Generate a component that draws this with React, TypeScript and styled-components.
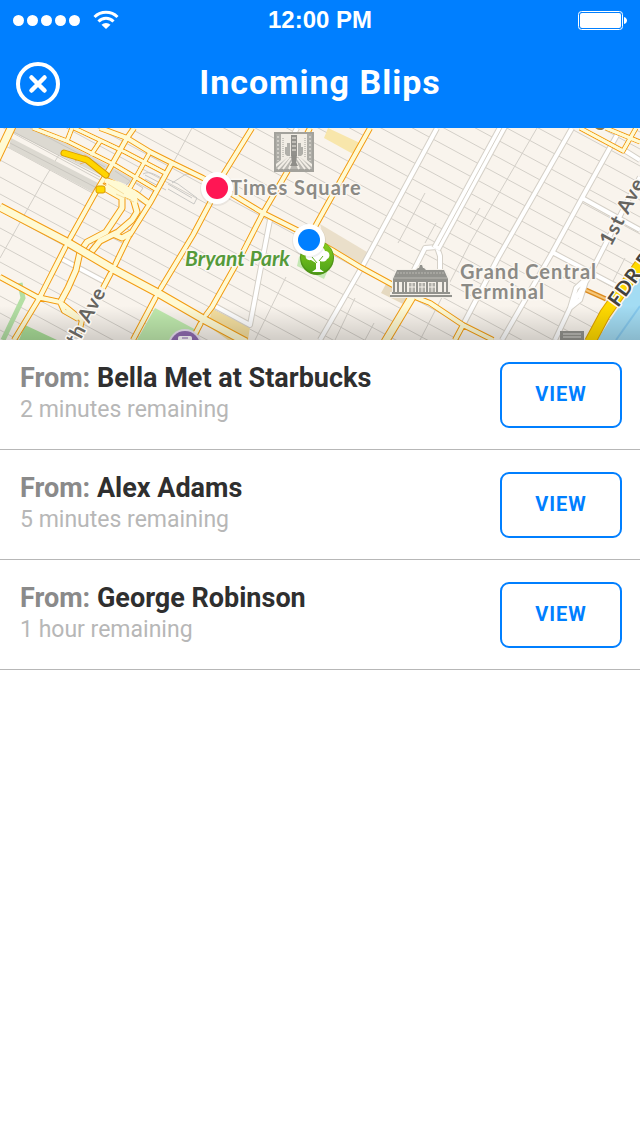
import React from "react";
import styled, { createGlobalStyle } from "styled-components";

const blue = "#007fff";

const GlobalStyle = createGlobalStyle`
  *, *::before, *::after { box-sizing: border-box; }
  body {
    margin: 0;
    background: #fff;
    font-family: Roboto, "Liberation Sans", sans-serif;
  }
`;

const Screen = styled.div`
  min-height: 100vh;
  background: #fff;
`;

const Header = styled.header`
  background: ${blue};
  color: #fff;
`;

const StatusBar = styled.div`
  display: grid;
  grid-template-columns: 1fr auto 1fr;
  align-items: center;
  height: 40px;
  padding: 0 13px;
`;

const Signal = styled.div`
  display: flex;
  align-items: center;
  gap: 3px;
`;

const Dot = styled.span`
  width: 11px;
  height: 11px;
  border-radius: 50%;
  background: #fff;
`;

const WifiIcon = styled.svg`
  margin-left: 10px;
`;

const Clock = styled.time`
  font: bold 24px "Liberation Sans", sans-serif;
`;

const BatteryIcon = styled.svg`
  justify-self: end;
`;

const NavBar = styled.div`
  display: grid;
  grid-template-columns: 44px 1fr 44px;
  align-items: center;
  height: 88px;
  padding: 0 16px;
`;

const CloseButton = styled.button`
  display: block;
  width: 44px;
  height: 44px;
  padding: 0;
  border: 0;
  background: none;
  color: inherit;
  cursor: pointer;

  svg { display: block; }
`;

const Title = styled.h1`
  margin: 0;
  padding-bottom: 4px;
  font-size: 34px;
  line-height: 40px;
  font-weight: 700;
  letter-spacing: 1px;
  text-align: center;
`;

const MapDrawing = styled.svg`
  display: block;
  width: 100%;
  height: auto;
  background: #f9f4ed;
`;

const MapLabel = styled.text`
  font-family: Lato, sans-serif;
  font-size: 20px;
  font-weight: 700;
  letter-spacing: 1px;
  paint-order: stroke;
  stroke: #fbf8f3;
  stroke-width: 3px;
  stroke-linejoin: round;
`;

const ParkLabel = styled(MapLabel)`
  font-size: 21px;
  font-style: italic;
  letter-spacing: 0;
`;

const BlipList = styled.ul`
  margin: 0;
  padding: 0;
  list-style: none;
`;

const BlipRow = styled.li`
  display: flex;
  justify-content: space-between;
  align-items: flex-start;
  gap: 20px;
  min-height: 110px;
  padding: 22px 18px 20px 20px;
  border-bottom: 1px solid #b7b7b7;
`;

const BlipText = styled.div`
  min-width: 0;
`;

const Sender = styled.h2`
  margin: 0;
  font-size: 27px;
  line-height: 32px;
  font-weight: 700;
  color: #2f2f2f;
`;

const FromLabel = styled.span`
  color: #8a8a8a;
`;

const Remaining = styled.p`
  margin: 0;
  font-size: 23px;
  line-height: 32px;
  font-weight: 400;
  color: #b7b7b7;
`;

const ViewButton = styled.button`
  flex: none;
  width: 122px;
  height: 66px;
  padding: 0 0 2px;
  border: 2px solid ${blue};
  border-radius: 9px;
  background: #fff;
  color: ${blue};
  font-family: inherit;
  font-size: 20px;
  font-weight: 700;
  letter-spacing: 1px;
  cursor: pointer;
`;

const streets = Array.from({ length: 34 }, (_, i) => {
  const y = -342 + i * 17;
  return `M0 ${y}L640 ${y + 346}`;
}).join("");

const laneAvenues =
  "M75 0L45 50L0 130M192 0L173 35M537 0L470 115L420 212M286 149L255 212M480 80L470 97M436 95L425 115M425 65L398 115M355 170L335 212M625 130L612 155M374 195L365 212";

const whiteRoads = [
  "M60 130L105 154",
  "M270 92L260 144L250 197L213 177",
  "M437 0L410 50L362 139L320 212",
  "M440 142L440 128L437 119L425 120L414 142",
  "M572 0L498 130L463 197",
  "M617 7L582 70L552 125L502 212",
  "M582 70L640 102",
  "M552 124L620 160",
  "M640 49L587 152L570 180L555 212",
  "M587 150L576 160L570 180L580 172L587 150",
  "M624 22L640 32",
  "M297 0L290 14",
];

const minorYellow = [
  "M33 0L67 13L113 36L157 62L148 77",
  "M74 0L125 24L165 45",
  "M72 0L67 13",
  "M101 12L91 27",
  "M150 24L130 60",
  "M580 0L623 23L636 0",
  "M606 0L640 14",
];

const yellowRoads = [
  "M100 0L127 10L150 24L172 35L203 50L230 65L263 85L297 102L332 122L360 139L393 157L410 167L430 175L463 197L493 212",
  "M134 0L127 10L110 40L97 62L68 114L40 169L14 212",
  "M172 35L150 75L128 110L113 141L103 160M82 192L79 205",
  "M252 0L223 47L210 75L193 107L158 165L133 212",
  "M310 0L287 44L263 85L243 124L212 179L203 191L192 212",
  "M370 0L341 52L312 104L300 112",
  "M463 197L455 212",
  "M0 149L37 169L60 174L82 192",
  "M60 174L64 183L78 191",
  "M210 195L240 211",
];

const ramps = [
  "M101 58L122 70L122 80L106 104L87 114L80 124L76 142L68 160L61 173",
  "M120 64L133 70L137 84L132 92L118 104L100 113L88 128",
  "M113 106L122 110L131 105",
  "M105 52L136 66L148 75",
  "M106 58L133 66",
];

const wideRoads = [
  "M0 79L67 114L113 141L158 165L203 191L246 214",
  "M13 -4L-4 32",
  "M412 169L385 214",
];

type RoadProps = {
  paths: string[];
  width: number;
  edge: string;
  fill: string;
};

function Roads({ paths, width, edge, fill }: RoadProps) {
  const d = paths.join("");
  return (
    <g fill="none" strokeLinejoin="round">
      <path d={d} stroke={edge} strokeWidth={width + 2} />
      <path d={d} stroke={fill} strokeWidth={width} />
    </g>
  );
}

function Marker({ x, y, color }: { x: number; y: number; color: string }) {
  return (
    <g>
      <circle cx={x} cy={y + 1} r="17" fill="#000" opacity=".06" />
      <circle cx={x} cy={y} r="16" fill="#fff" />
      <circle cx={x} cy={y} r="11" fill={color} />
    </g>
  );
}

function TimesSquareIcon() {
  return (
    <g transform="translate(274 4)">
      <rect width="40" height="40" fill="#a3a29c" />
      <rect x="2" y="2" width="36" height="35" fill="#f1ede5" />
      <path d="M2 2H7V28L2 32ZM38 2H33V28L38 32Z" fill="#aeada7" />
      <path d="M4 4V29M36 4V29" stroke="#f1ede5" strokeDasharray="2 2" />
      <path d="M9 6V26M31 6V26" stroke="#a3a29c" strokeDasharray="1 1" />
      <path d="M11 15H13V11H16V24H13L11 22ZM29 15H27V11H24V24H27L29 22Z" fill="#b0afa9" />
      <path d="M17 3H23V24H17Z" fill="#92918c" />
      <path d="M18 6H22M18 10H22M18 14H22M18 18H22" stroke="#f1ede5" />
      <path d="M2 37V35L14 25H26L38 35V37Z" fill="#b8b6b0" />
      <path
        d="M15 25L4 37M17 26L9 37M18 30L15 37M23 26L31 37M25 25L36 37M22 30L25 37"
        stroke="#f1ede5"
        strokeWidth="2"
      />
      <path d="M17 23H23L22 30L24 34H16L18 30Z" fill="#8f8e89" />
    </g>
  );
}

function TerminalIcon() {
  return (
    <g transform="translate(390 137)">
      <path
        d="M0 27H2V12L6 4H25L31 -2L37 4H55L60 12V27H62V33H0Z"
        fill="#f4f0e9"
      />
      <path
        d="M3 14L7 5H26L28 3H29L30 0H32L33 3H34L36 5H54L58 14V17H3Z"
        fill="#92928d"
      />
      <path d="M7 8H54" stroke="#b9b8b2" strokeDasharray="2 1" />
      <path d="M4 13H57" stroke="#b9b8b2" />
      <path
        d="M4 16V28M8 16V28M13 17V28M16 17V28M27 17V28M37 17V28M47 17V28M53 16V28M57 16V28"
        stroke="#92928d"
        strokeWidth="2"
      />
      <path d="M19 18H25V28H19ZM29 18H35V28H29ZM39 18H45V28H39Z" fill="#aeada7" />
      <path d="M22 18V28M32 18V28M42 18V28M19 22H25M29 22H35M39 22H45" stroke="#f4f0e9" />
      <path d="M2 28H60M0 31H62" stroke="#92928d" strokeWidth="2" />
    </g>
  );
}

function ParkIcon() {
  return (
    <g>
      <path d="M299 129L309 118L332 133L324 151L297 138Z" fill="#c5e8b4" />
      <circle cx="317" cy="130" r="17" fill="#4f9417" />
      <circle cx="317" cy="129" r="16" fill="url(#parkFill)" />
      <path
        d="M312 144L316 141V135L311 132C306 133 304 128 307 126C307 122 311 119 315 122C317 117 324 118 325 123C330 123 331 129 327 131C326 134 322 134 320 133V141L324 144Z"
        fill="#fff"
      />
      <path d="M317 135L312 129M319 133L323 128" stroke="#64b21d" />
    </g>
  );
}

function CityMap() {
  return (
    <MapDrawing viewBox="0 0 640 212" role="img" aria-label="Map of Midtown Manhattan">
      <defs>
        <linearGradient id="shade" x1="0" y1="0" x2="0" y2="1">
          <stop offset="0" stopColor="#000" stopOpacity="0" />
          <stop offset="1" stopColor="#000" stopOpacity=".16" />
        </linearGradient>
        <linearGradient id="parkFill" x1="0" y1="0" x2="0" y2="1">
          <stop offset="0" stopColor="#8ccf1c" />
          <stop offset="1" stopColor="#4ea31a" />
        </linearGradient>
      </defs>

      <g fill="none" stroke="#d3cfc8" strokeWidth="1">
        <path d={streets} />
        <path d={laneAvenues} />
      </g>

      <path d="M12 0H36L108 37L133 51L128 57L98 46L14 5Z" fill="#dcd9d1" />
      <path d="M11 10L98 55L94 65L9 20Z" fill="#dcd9d1" />
      <path d="M12 3L100 49M10 15L95 59M30 0L105 39" stroke="#c9c6bf" fill="none" />
      <path
        d="M115 43L130 53L126 57M118 41L135 50M143 46C150 42 157 48 165 52M145 51L166 62M145 47L164 57M165 50L178 56L197 70L194 76L168 61M168 56L192 70M172 55L186 46L204 49M135 55L143 60L139 66"
        stroke="#c9c8c5"
        fill="none"
      />

      <path d="M155 180L200 204L196 212H137Z" fill="#bfe9ad" />
      <path d="M25 197L57 212H19Z" fill="#a9dd98" />
      <path d="M20 155L23 170L3 212" fill="none" stroke="#b3dfa4" strokeWidth="5" />
      <path d="M328 0L360 15L353 26L324 10Z" fill="#f8e6ab" />
      <path d="M320 96L367 124L361 137L325 116Z" fill="#eadfca" />
      <path d="M212 181L250 199L248 212H228L208 198Z" fill="#f4dfa0" />
      <path d="M386 156L410 167L403 176L381 165Z" fill="#e5d9c0" />

      <path d="M640 150L615 185L597 212H640Z" fill="#a3dcf3" />
      <path d="M640 178L616 212" stroke="#86c9ee" strokeWidth="2" />

      <Roads paths={whiteRoads} width={4} edge="#d5d0c7" fill="#fff" />
      <Roads paths={["M503 -2L436 121"]} width={8} edge="#d5d0c7" fill="#fff" />
      <path d="M503 -2L438 118" stroke="#d5d0c7" />

      <Roads paths={minorYellow} width={3} edge="#f39c12" fill="#fffad3" />
      <Roads paths={yellowRoads} width={4} edge="#f39c12" fill="#fffad3" />
      <Roads paths={ramps} width={5} edge="#f39c12" fill="#fffad3" />
      <Roads paths={wideRoads} width={7} edge="#f39c12" fill="#fffad3" />
      <path
        d={yellowRoads.join("") + minorYellow.join("")}
        fill="none"
        stroke="#fffad3"
        strokeWidth="3"
      />
      <path d="M105 50L120 54L136 63L138 75L128 70L108 62Z" fill="#fffad3" />
      <path d="M108 56L124 66M116 66L134 74" stroke="#f6dfa0" />

      <path d="M75 33L85 27L92 32L80 36" fill="none" stroke="#eab566" />
      <g fill="none" strokeLinecap="round" strokeLinejoin="round">
        <path d="M64 25L87 32L106 47" stroke="#d89b00" strokeWidth="7" />
        <path d="M64 25L87 32L106 47" stroke="#ffd500" strokeWidth="5" />
      </g>
      <rect x="96" y="58" width="9" height="7" rx="2" fill="#ffd800" stroke="#d89b00" />

      <path d="M586 162L606 171" stroke="#dc8a1e" strokeWidth="5" />
      <path d="M586 162L606 171" stroke="#f5c77a" strokeWidth="2" />
      <Roads paths={["M646 128L605 186L590 214"]} width={10} edge="#dca000" fill="#ffd900" />

      <rect x="560" y="203" width="24" height="9" fill="#92928d" />
      <path d="M563 206H581M563 209H581" stroke="#deddd8" />

      <circle cx="185" cy="218" r="17" fill="#e9e2f0" />
      <circle cx="185" cy="218" r="15" fill="#8f6cb0" />
      <path d="M178 212V210Q178 208 180 208H190Q192 208 192 210V212Z" fill="#fff" />
      <path d="M182 210H188" stroke="#8f6cb0" />

      <TimesSquareIcon />
      <TerminalIcon />

      <rect y="178" width="640" height="34" fill="url(#shade)" />

      <ParkIcon />

      <MapLabel x="230" y="67" fill="#8b8a85">Times Square</MapLabel>
      <MapLabel x="460" y="151" fill="#8b8a85">
        Grand Central
        <tspan x="461" dy="20">Terminal</tspan>
      </MapLabel>
      <ParkLabel x="185" y="138" fill="#559a3a">Bryant Park</ParkLabel>
      <MapLabel transform="translate(71 230) rotate(-62)" fill="#66645f">9th Ave</MapLabel>
      <MapLabel transform="translate(611 119) rotate(-62)" fill="#66645f">1st Ave</MapLabel>
      <MapLabel transform="translate(618 180) rotate(-54)" fill="#44423d">FDR Dr</MapLabel>
      <MapLabel x="595" y="2" fill="#8b7a4a">S</MapLabel>

      <Marker x={217} y={60} color="#ff1654" />
      <Marker x={309} y={112} color={blue} />
    </MapDrawing>
  );
}

const blips = [
  { name: "Bella Met at Starbucks", remaining: "2 minutes remaining" },
  { name: "Alex Adams", remaining: "5 minutes remaining" },
  { name: "George Robinson", remaining: "1 hour remaining" },
];

export default function App() {
  return (
    <Screen>
      <GlobalStyle />
      <Header>
        <StatusBar>
          <Signal>
            {[0, 1, 2, 3, 4].map((n) => (
              <Dot key={n} />
            ))}
            <WifiIcon width="26" height="20" viewBox="0 0 26 20" fill="none" aria-hidden="true">
              <path d="M1.500 7A16.500 16.500 0 0 1 24.500 7" stroke="#fff" strokeWidth="3" />
              <path d="M5.500 11.500A10.500 10.500 0 0 1 20.500 11.500" stroke="#fff" strokeWidth="3" />
              <path d="M13 19L8.500 14.800A6.500 6.500 0 0 1 17.500 14.800Z" fill="#fff" />
            </WifiIcon>
          </Signal>
          <Clock>12:00 PM</Clock>
          <BatteryIcon width="49" height="20" viewBox="0 0 49 20" aria-hidden="true">
            <rect x=".5" y="1.5" width="44" height="18" rx="3" fill="none" stroke="#fff" />
            <rect x="2" y="3" width="41" height="15" rx="2" fill="#fff" />
            <path d="M46 7C50 8 50 13 46 14Z" fill="#fff" />
          </BatteryIcon>
        </StatusBar>
        <NavBar>
          <CloseButton type="button" aria-label="Close">
            <svg width="44" height="44" viewBox="0 0 44 44" fill="none" stroke="#fff">
              <circle cx="22" cy="22" r="20" strokeWidth="4" />
              <path d="M15.500 15.500L28.500 28.500M28.500 15.500L15.500 28.500" strokeWidth="4.500" strokeLinecap="round" />
            </svg>
          </CloseButton>
          <Title>Incoming Blips</Title>
        </NavBar>
      </Header>
      <main>
        <CityMap />
        <BlipList>
          {blips.map((blip) => (
            <BlipRow key={blip.name}>
              <BlipText>
                <Sender>
                  <FromLabel>From:</FromLabel> {blip.name}
                </Sender>
                <Remaining>{blip.remaining}</Remaining>
              </BlipText>
              <ViewButton type="button" aria-label={`VIEW blip from ${blip.name}`}>
                VIEW
              </ViewButton>
            </BlipRow>
          ))}
        </BlipList>
      </main>
    </Screen>
  );
}
